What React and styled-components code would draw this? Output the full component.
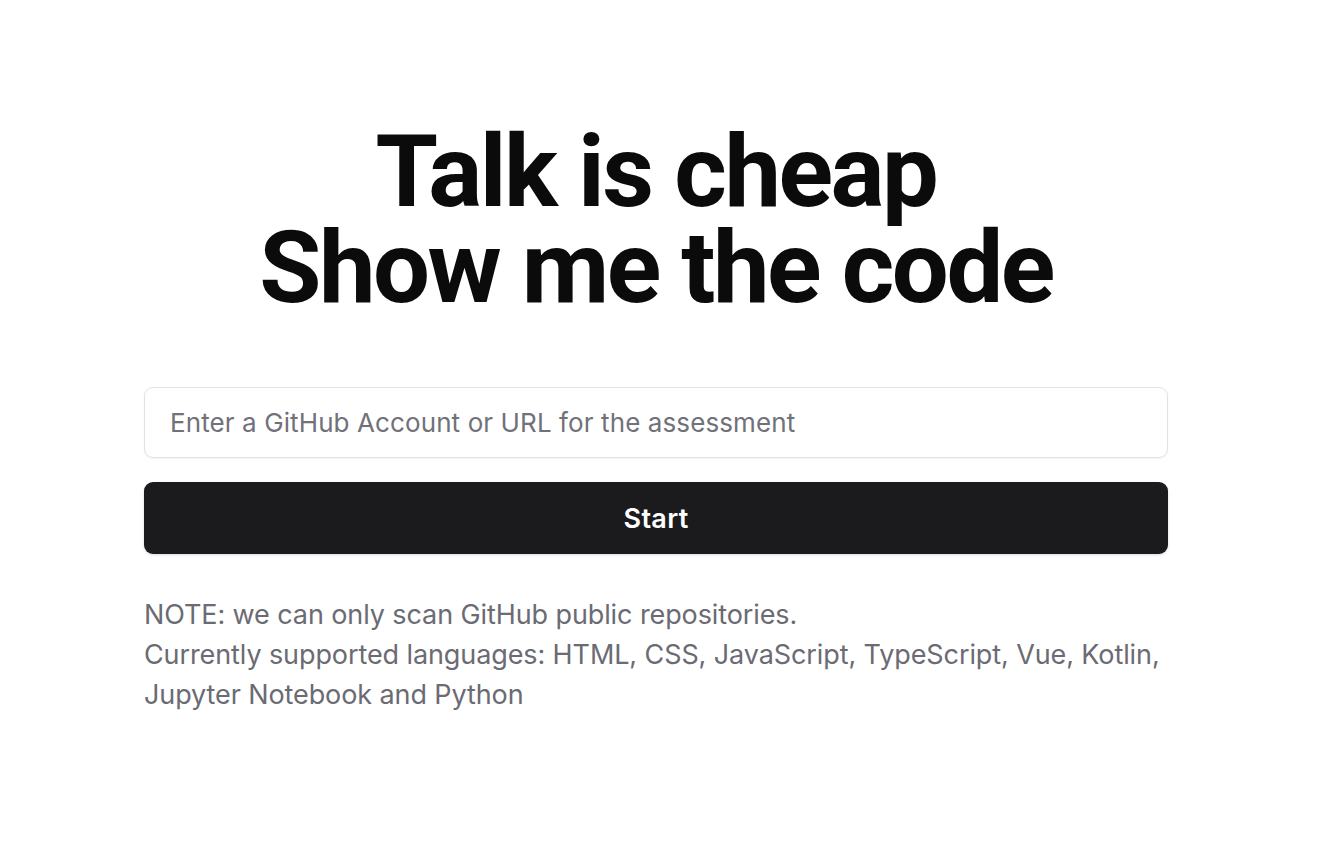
import React from "react";
import styled, { createGlobalStyle } from "styled-components";

const Global = createGlobalStyle`
  html, body { margin: 0; padding: 0; background: #ffffff; }
  body { font-family: Inter, "Noto Sans", sans-serif; }
  * { box-sizing: border-box; }
`;

const Page = styled.main`
  width: 1340px;
  min-height: 856px;
  padding: 124px 0 0 144px;
`;

const Column = styled.div`
  width: 1024px;
  display: flex;
  flex-direction: column;
`;

const Title = styled.h1`
  margin: 0 0 71px;
  text-align: center;
  font-family: Roboto, "DejaVu Sans", sans-serif;
  font-weight: 700;
  font-size: 101px;
  line-height: 96px;
  letter-spacing: -2.5px;
  color: #0b0b0c;
`;

const Line = styled.span`
  display: block;
`;

const Input = styled.input`
  height: 71px;
  width: 100%;
  border: 1.5px solid #e2e2e4;
  border-radius: 9px;
  padding: 0 25px;
  font-family: Inter, "Noto Sans", sans-serif;
  font-size: 26px;
  letter-spacing: 0.1px;
  color: #18181b;
  outline: none;
  box-shadow: 0 1px 2px rgba(0, 0, 0, 0.05);
  &::placeholder { color: #71717a; }
`;

const Button = styled.button`
  margin-top: 24px;
  height: 72px;
  width: 100%;
  border: none;
  border-radius: 9px;
  background: #1b1b1d;
  color: #ffffff;
  font-family: Inter, "Noto Sans", sans-serif;
  font-weight: 600;
  font-size: 27px;
  letter-spacing: 0.3px;
  box-shadow: 0 1px 3px rgba(0, 0, 0, 0.15);
  cursor: pointer;
`;

const Note = styled.p`
  margin: 41px 0 0;
  font-family: Inter, "Noto Sans", sans-serif;
  font-size: 27px;
  line-height: 40px;
  letter-spacing: -0.1px;
  color: #6b6b73;
`;

export default function App() {
  return (
    <>
      <Global />
      <Page>
        <Column>
          <Title>
            <Line>Talk is cheap</Line>
            <Line>Show me the code</Line>
          </Title>
          <Input placeholder="Enter a GitHub Account or URL for the assessment" />
          <Button>Start</Button>
          <Note>
            NOTE: we can only scan GitHub public repositories.
            <br />
            Currently supported languages: HTML, CSS, JavaScript, TypeScript, Vue, Kotlin,
            Jupyter Notebook and Python
          </Note>
        </Column>
      </Page>
    </>
  );
}
